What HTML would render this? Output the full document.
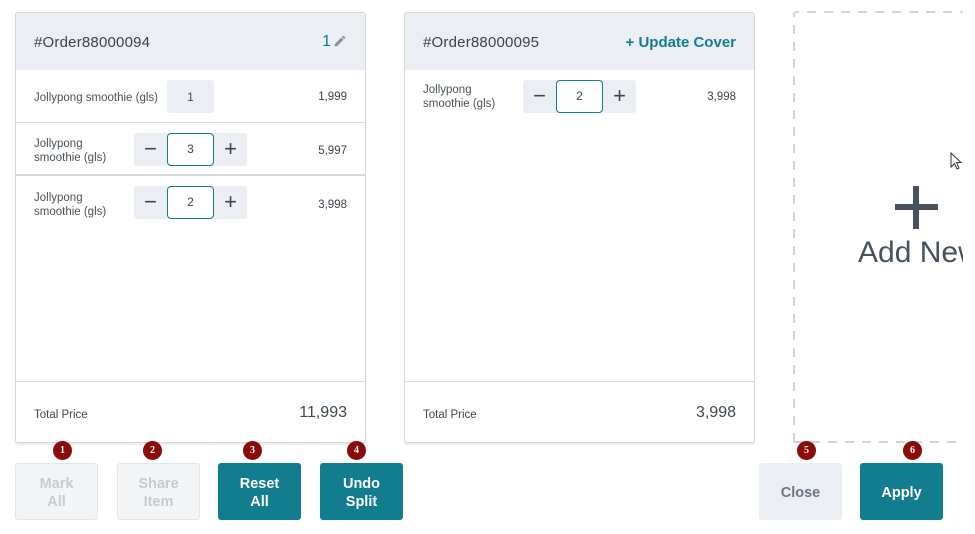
<!DOCTYPE html>
<html><head><meta charset="utf-8"><style>
*{box-sizing:border-box;margin:0;padding:0}
body{width:975px;height:534px;background:#fff;font-family:"Liberation Sans",Arial,sans-serif;color:#3f4853;position:relative;overflow:hidden}
.a{position:absolute}
.card{position:absolute;top:12px;height:431px;border:1px solid #d6d8db;border-radius:3px;background:#fff;box-shadow:0 2px 1px rgba(0,0,0,.08)}
.hd{position:absolute;left:0;right:0;top:0;height:57px;background:#ebeff3}
.title{position:absolute;left:18px;top:21px;font-size:15px;color:#3b434c;letter-spacing:.2px}
.row{position:absolute;left:0;right:0;height:53px;border-bottom:1px solid #d6d8db}
.nm{position:absolute;left:18px;font-size:11.5px;line-height:14px;color:#4a525b}
.pr{position:absolute;right:18px;font-size:11.5px;color:#3b434c}
.step{position:absolute;width:113px;height:33px;background:#ebeff3;border-radius:3px}
.step .m,.step .p{position:absolute;top:0;width:33px;height:33px;text-align:center;line-height:31px;font-size:22px;color:#3b434c}
.step .m{left:0}.step .p{right:0}
.step .v{position:absolute;left:33px;top:0;width:47px;height:33px;border:1.5px solid #137d8e;border-radius:4px;background:#fff;text-align:center;line-height:31px;font-size:12px}
.ft{position:absolute;left:0;right:0;bottom:0;height:61px;border-top:1px solid #d6d8db}
.btn{position:absolute;top:463px;width:83px;height:57px;border-radius:3px;text-align:center;font-size:14.5px;line-height:18px;font-weight:bold;display:flex;align-items:center;justify-content:center;padding-top:3px}
.dis{background:#f3f5f7;border:1px solid #e3e6ea;color:#c4cbd3}
.pri{background:#127d8f;color:#fff}
.bd{position:absolute;top:441px;width:19px;height:19px;border-radius:50%;background:#8b0a0a;color:#fff;font-size:10px;font-weight:bold;text-align:center;line-height:19px;font-family:"Liberation Serif",serif}
</style></head><body>

<div class="card" style="left:15px;width:351px">
 <div class="hd"><div class="title">#Order88000094</div>
  <div class="a" style="right:34px;top:20px;font-size:16px;color:#137d8e">1</div>
  <svg class="a" style="right:18px;top:21px" width="14" height="14" viewBox="0 0 24 24"><path d="M3 17.25V21h3.75L17.81 9.94l-3.75-3.75L3 17.25zM20.71 7.04a1 1 0 000-1.410l-2.34-2.34a1 1 0 00-1.41 0l-1.83 1.83 3.75 3.75 1.83-1.83z" fill="#8a9099"/></svg>
 </div>
 <div class="row" style="top:57px"><div class="nm" style="top:21px">Jollypong smoothie (gls)</div>
  <div class="a" style="left:151px;top:10px;width:47px;height:33px;background:#ebeff3;border-radius:3px;text-align:center;line-height:34px;font-size:12px">1</div>
  <div class="pr" style="top:21px">1,999</div></div>
 <div class="row" style="top:110px;border-bottom-width:2px"><div class="nm" style="top:14px">Jollypong<br>smoothie (gls)</div>
  <div class="step" style="left:118px;top:10px"><div class="m">−</div><div class="v">3</div><div class="p">+</div></div>
  <div class="pr" style="top:22px">5,997</div></div>
 <div class="a" style="top:164px;left:0;right:0;height:53px"><div class="nm" style="top:14px">Jollypong<br>smoothie (gls)</div>
  <div class="step" style="left:118px;top:9px"><div class="m">−</div><div class="v">2</div><div class="p">+</div></div>
  <div class="pr" style="top:22px">3,998</div></div>
 <div class="ft"><div class="a" style="left:18px;top:27px;font-size:11.5px">Total Price</div>
  <div class="a" style="right:18px;top:22px;font-size:16px">11,993</div></div>
</div>

<div class="card" style="left:404px;width:351px">
 <div class="hd"><div class="title">#Order88000095</div>
  <div class="a" style="right:18px;top:21px;font-size:15px;color:#137d8e;font-weight:bold">+ Update Cover</div></div>
 <div class="a" style="top:57px;left:0;right:0;height:53px"><div class="nm" style="top:13px">Jollypong<br>smoothie (gls)</div>
  <div class="step" style="left:118px;top:10px"><div class="m">−</div><div class="v">2</div><div class="p">+</div></div>
  <div class="pr" style="top:21px">3,998</div></div>
 <div class="ft"><div class="a" style="left:18px;top:27px;font-size:11.5px">Total Price</div>
  <div class="a" style="right:18px;top:22px;font-size:16px">3,998</div></div>
</div>

<div class="a" style="left:790px;top:0;width:173px;height:450px;overflow:hidden">
 <svg class="a" style="left:0;top:0" width="173" height="450"><path d="M4 442V14Q4 12 8 12H300M4 442H300" fill="none" stroke="#d2d5d8" stroke-width="2" stroke-dasharray="9 8"/></svg>
 <div class="a" style="left:105px;top:204px;width:43px;height:6px;background:#47525e"></div>
 <div class="a" style="left:123px;top:186px;width:6px;height:43px;background:#47525e"></div>
 <div class="a" style="left:68px;top:236px;font-size:30px;color:#47525e;white-space:nowrap">Add New</div>
</div>
<svg class="a" style="left:950px;top:152px" width="14" height="20" viewBox="0 0 14 20"><path d="M1 1V15L4.5 11.5L7 17L9 16L6.5 10.5H11Z" fill="#fff" stroke="#333" stroke-width="1"/></svg>

<div class="btn dis" style="left:15px">Mark<br>All</div>
<div class="btn dis" style="left:117px">Share<br>Item</div>
<div class="btn pri" style="left:218px">Reset<br>All</div>
<div class="btn pri" style="left:320px">Undo<br>Split</div>
<div class="btn" style="left:759px;background:#ebeff3;color:#6b7682">Close</div>
<div class="btn pri" style="left:860px">Apply</div>

<div class="bd" style="left:53px">1</div>
<div class="bd" style="left:143px">2</div>
<div class="bd" style="left:243px">3</div>
<div class="bd" style="left:347px">4</div>
<div class="bd" style="left:797px">5</div>
<div class="bd" style="left:903px">6</div>
</body></html>
